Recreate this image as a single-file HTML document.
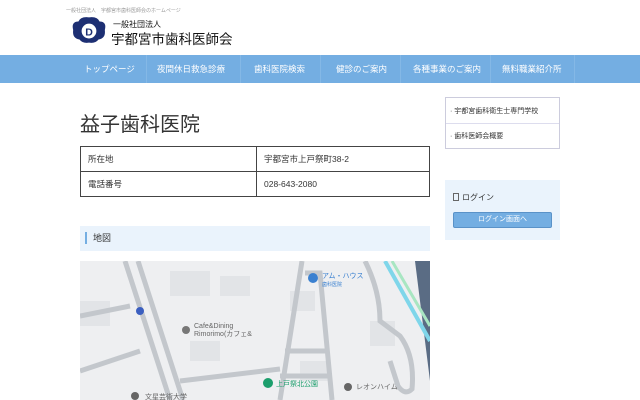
<!DOCTYPE html>
<html><head><meta charset="utf-8"><style>
*{margin:0;padding:0;box-sizing:border-box}
body{width:640px;height:400px;overflow:hidden;background:#fff;font-family:"Liberation Sans","Noto Sans CJK JP",sans-serif;color:#333;position:relative}
.a{position:absolute}
.nav{left:0;top:55px;width:640px;height:28px;background:#74aee2}
.nav span{position:absolute;top:8px;font-size:8.5px;color:#fff;white-space:nowrap}
.nav i{position:absolute;top:0;width:1px;height:28px;background:#84b8e6}
table{border-collapse:collapse;position:absolute;left:80px;top:146px;width:350px}
td{border:1px solid #444;height:25px;font-size:8.5px;padding-left:7px}
</style></head><body>
<div class="a" style="left:66px;top:7px;font-size:5px;color:#999">一般社団法人　宇都宮市歯科医師会のホームページ</div>
<svg class="a" style="left:70px;top:14px" width="38" height="32" viewBox="0 0 36 28">
<path d="M3 14 Q1 6 8 6 Q10 1 18 2 Q26 1 28 6 Q35 6 33 14 Q34 22 27 23 Q24 27 18 26 Q12 27 9 23 Q2 22 3 14Z" fill="#1d2f73"/>
<circle cx="18" cy="15" r="7" fill="#fff"/><text x="18" y="19" font-size="10" text-anchor="middle" fill="#1d2f73" font-weight="bold">D</text></svg>
<div class="a" style="left:113px;top:19px;font-size:8px;color:#111">一般社団法人</div>
<div class="a" style="left:111px;top:28px;font-size:13.5px;color:#111">宇都宮市歯科医師会</div>
<div class="a nav">
<span style="left:84px">トップページ</span><i style="left:146px"></i>
<span style="left:157px">夜間休日救急診療</span><i style="left:240px"></i>
<span style="left:254px">歯科医院検索</span><i style="left:320px"></i>
<span style="left:336px">健診のご案内</span><i style="left:400px"></i>
<span style="left:413px">各種事業のご案内</span><i style="left:490px"></i>
<span style="left:502px">無料職業紹介所</span><i style="left:574px"></i>
</div>
<div class="a" style="left:80px;top:108px;font-size:20px;color:#333">益子歯科医院</div>
<table><tr><td style="width:176px">所在地</td><td>宇都宮市上戸祭町38-2</td></tr><tr><td>電話番号</td><td>028-643-2080</td></tr></table>
<div class="a" style="left:80px;top:226px;width:350px;height:25px;background:#eaf3fc"></div>
<div class="a" style="left:85px;top:232px;width:2px;height:12px;background:#74aee2"></div>
<div class="a" style="left:93px;top:231px;font-size:9px">地図</div>
<svg class="a" style="left:80px;top:261px" width="350" height="139" viewBox="0 0 350 139">
<rect width="350" height="139" fill="#eeeff1"/>
<g fill="#e2e4e7"><rect x="90" y="10" width="40" height="25"/><rect x="140" y="15" width="30" height="20"/><rect x="110" y="80" width="30" height="20"/><rect x="210" y="30" width="25" height="20"/><rect x="220" y="100" width="30" height="20"/><rect x="290" y="60" width="25" height="25"/><rect x="0" y="40" width="30" height="25"/></g>
<path d="M335 0 L350 0 L350 120 Z" fill="#5a6c84"/>
<path d="M305 0 L350 80" stroke="#7fd6ea" stroke-width="4" fill="none"/>
<path d="M312 0 L350 65" stroke="#a8e6c2" stroke-width="3" fill="none"/>
<g stroke="#c3c7cc" fill="none" stroke-width="5">
<path d="M45 0 L90 139"/><path d="M58 0 L103 139"/>
<path d="M0 110 L60 90"/><path d="M0 55 L50 45"/>
<path d="M222 0 L200 139"/><path d="M225 12 L240 12 L252 139"/>
<path d="M205 90 L245 90"/><path d="M200 115 L250 115"/>
<path d="M100 120 L200 108"/>
<path d="M285 0 Q300 30 300 60 L320 75 Q335 95 332 128 Q325 135 318 125 L310 100"/>
</g>
<circle cx="60" cy="50" r="4" fill="#3b5fc0"/>
<circle cx="233" cy="17" r="5" fill="#3a80d0"/><text x="242" y="17" font-size="7" fill="#3a80d0">アム・ハウス</text><text x="242" y="25" font-size="5" fill="#3a80d0">歯科医院</text>
<circle cx="106" cy="69" r="4" fill="#777"/><text x="114" y="67" font-size="7" fill="#666">Cafe&amp;Dining</text><text x="114" y="75" font-size="7" fill="#666">Rimorimo(カフェ&amp;</text>
<circle cx="188" cy="122" r="5" fill="#1b9e6c"/><text x="196" y="125" font-size="7" fill="#1b9e6c">上戸祭北公園</text>
<circle cx="268" cy="126" r="4" fill="#666"/><text x="276" y="128" font-size="7" fill="#666">レオンハイム</text>
<circle cx="55" cy="135" r="4" fill="#666"/><text x="65" y="138" font-size="7" fill="#666">文星芸術大学</text>
</svg>
<div class="a" style="left:445px;top:97px;width:115px;height:52px;border:1px solid #ccd;"></div>
<div class="a" style="left:446px;top:123px;width:113px;height:1px;background:#dde"></div>
<div class="a" style="left:450px;top:106px;font-size:7px;color:#333">· 宇都宮歯科衛生士専門学校</div>
<div class="a" style="left:450px;top:131px;font-size:7px;color:#333">· 歯科医師会概要</div>
<div class="a" style="left:445px;top:180px;width:115px;height:60px;background:#eaf3fc"></div>
<div class="a" style="left:453px;top:193px;width:6px;height:8px;border:1px solid #666"></div>
<div class="a" style="left:462px;top:192px;font-size:8px;color:#333">ログイン</div>
<div class="a" style="left:453px;top:212px;width:99px;height:16px;background:#74aee2;border:1px solid #5a92c8;border-radius:2px;color:#fff;font-size:7px;text-align:center;line-height:14px">ログイン画面へ</div>
</body></html>
